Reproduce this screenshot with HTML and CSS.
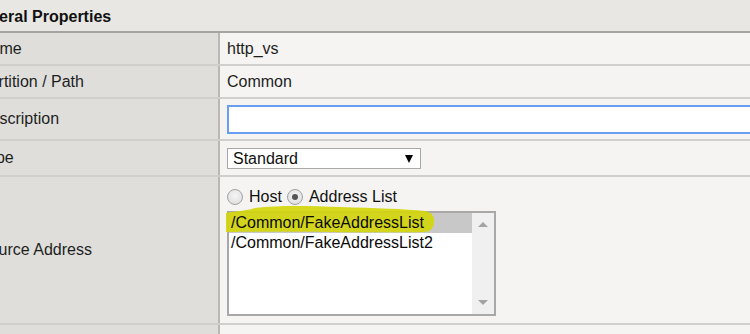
FILE: index.html
```html
<!DOCTYPE html>
<html lang="en">
<head>
    <meta charset="UTF-8">
    <meta name="viewport" content="width=device-width, initial-scale=1.0">
    <title>Virtual Server - General Properties</title>
    <link rel="stylesheet" href="styles.css">
</head>
<body>
    <div class="panel">
        <div class="panel-head">General Properties</div>

        <div class="row">
            <div class="label">Name</div>
            <div class="value">http_vs</div>
        </div>

        <div class="row">
            <div class="label">Partition / Path</div>
            <div class="value">Common</div>
        </div>

        <div class="row">
            <div class="label">Description</div>
            <div class="value value-input">
                <input type="text" class="text-field">
            </div>
        </div>

        <div class="row">
            <div class="label">Type</div>
            <div class="value value-select">
                <div class="dropdown">
                    <span>Standard</span>
                    <span class="caret"></span>
                </div>
            </div>
        </div>

        <div class="row">
            <div class="label">Source Address</div>
            <div class="value value-source">
                <div class="radio-line">
                    <span class="radio"></span>
                    <span class="radio-text">Host</span>
                    <span class="radio checked"></span>
                    <span class="radio-text">Address List</span>
                </div>
                <div class="listbox">
                    <div class="list-items">
                        <div class="list-item selected">
                            <svg class="marker" width="212" height="30" viewBox="0 0 212 30">
                                <path d="M1 27 L1 8 C10 6 22 6 30 3 C55 0 85 1 115 2 C150 3 180 4 200 6 C207 7 210 12 209 18 C208 24 205 27 199 27 C150 28 60 26 1 27 Z" fill="#d2d60c" fill-opacity="0.92"/>
                            </svg>
                            <span class="item-text">/Common/FakeAddressList</span>
                        </div>
                        <div class="list-item"><span class="item-text">/Common/FakeAddressList2</span></div>
                    </div>
                    <div class="scrollbar">
                        <span class="arrow-up"></span>
                        <span class="arrow-down"></span>
                    </div>
                </div>
            </div>
        </div>

        <div class="row">
            <div class="label">&nbsp;</div>
            <div class="value">&nbsp;</div>
        </div>
    </div>
</body>
</html>
```

FILE: styles.css
```css
body {
    margin: 0;
    font-family: "Liberation Sans", Arial, sans-serif;
    font-size: 16px;
    line-height: 18px;
    color: #1e1e1e;
    background-color: #f5f4f2;
    overflow: hidden;
}
.panel {
    margin-left: -36px;
    width: 820px;
}
.panel-head {
    background-color: #e8e7e3;
    font-weight: bold;
    color: #111;
    padding: 8px 0 5px 4px;
    border-bottom: 2px solid #a4a4a2;
}
.row {
    display: grid;
    grid-template-columns: 256px 1fr;
    border-bottom: 2px solid #d0cfcc;
}
.label {
    background-color: #dfdedb;
    border-right: 2px solid #b9b8b5;
    padding-left: 15px;
    display: flex;
    align-items: center;
}
.value {
    padding: 7px 7px 6px 7px;
    background-color: #f5f4f2;
}
.value-input {
    padding: 6px 0 5px 7px;
}
.text-field {
    display: block;
    box-sizing: border-box;
    width: 600px;
    height: 29px;
    margin: 0;
    border: 2px solid #6a9ef3;
    background-color: #fff;
    outline: none;
}
.value-select {
    padding: 7px 7px 6px 7px;
}
.dropdown {
    box-sizing: border-box;
    width: 194px;
    height: 21px;
    border: 1px solid #a9a9a9;
    background-color: #fff;
    display: flex;
    align-items: center;
    justify-content: space-between;
    padding: 0 7px 0 5px;
    color: #111;
}
.caret {
    width: 0;
    height: 0;
    border-left: 4.5px solid transparent;
    border-right: 4.5px solid transparent;
    border-top: 8px solid #000;
}
.value-source {
    padding: 10px 7px 7px 7px;
}
.radio-line {
    display: flex;
    align-items: center;
    height: 20px;
    margin-bottom: 4px;
    color: #111;
}
.radio {
    box-sizing: border-box;
    width: 16px;
    height: 16px;
    border: 1px solid #a2a2a2;
    border-radius: 50%;
    background: radial-gradient(circle at 50% 40%, #f6f6f6, #d9d9d9);
    display: flex;
    align-items: center;
    justify-content: center;
}
.radio.checked::after {
    content: "";
    width: 6px;
    height: 6px;
    border-radius: 50%;
    background-color: #555;
}
.radio-text {
    margin: 0 5px 0 6px;
}
.listbox {
    box-sizing: border-box;
    width: 269px;
    height: 105px;
    border: 2px solid #a8a8a8;
    background-color: #fff;
    display: flex;
}
.list-items {
    flex: 1;
    position: relative;
}
.list-item {
    position: relative;
    height: 20px;
    line-height: 20px;
    padding-left: 2px;
    color: #0a0a0a;
    white-space: nowrap;
}
.list-item.selected {
    background-color: #c8c8c8;
}
.marker {
    position: absolute;
    left: -4px;
    top: -8px;
    z-index: 1;
}
.item-text {
    position: relative;
    z-index: 2;
}
.scrollbar {
    width: 22px;
    background-color: #f0f0f0;
    display: flex;
    flex-direction: column;
    justify-content: space-between;
    align-items: center;
    padding: 9px 0 9px 0;
}
.arrow-up {
    width: 0;
    height: 0;
    border-left: 5px solid transparent;
    border-right: 5px solid transparent;
    border-bottom: 5px solid #a3a3a3;
}
.arrow-down {
    width: 0;
    height: 0;
    border-left: 5px solid transparent;
    border-right: 5px solid transparent;
    border-top: 5px solid #a3a3a3;
}
```
